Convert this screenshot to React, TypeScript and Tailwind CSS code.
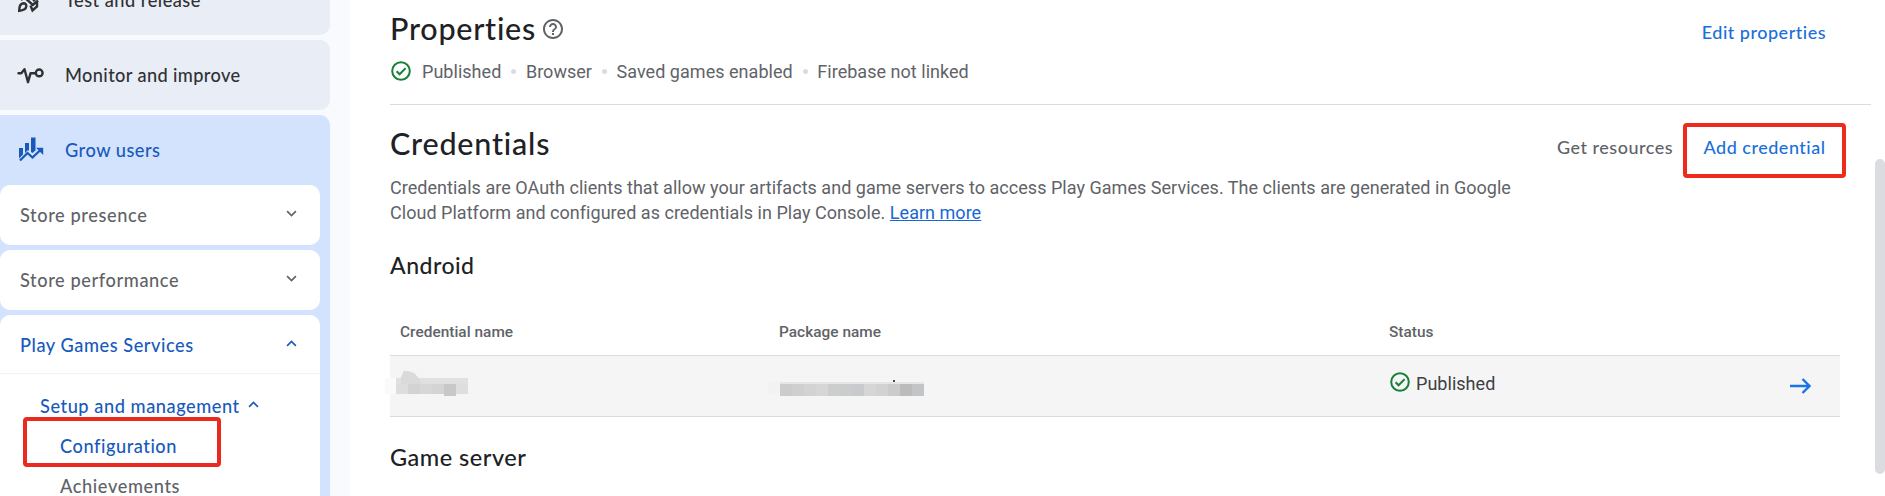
import type { ReactNode } from "react";

function Chevron({ up = false, className = "" }: { up?: boolean; className?: string }) {
  return (
    <svg className={"h-[7px] w-[11px] " + className} viewBox="0 0 12 7" fill="none" stroke="currentColor" strokeWidth="1.8">
      <path d={up ? "M1.2 6 6 1.2 10.8 6" : "M1.2 1 6 5.8 10.8 1"} />
    </svg>
  );
}

function CheckCircle() {
  return (
    <svg className="size-5 shrink-0 text-[#188038]" viewBox="0 0 20 20" fill="none" stroke="currentColor" strokeWidth="2">
      <circle cx="10" cy="10" r="8.8" />
      <path d="M5.6 10.3 8.6 13.3 14.6 7.1" />
    </svg>
  );
}

function HelpCircle() {
  return (
    <svg className="size-5 shrink-0 text-[#5f6368]" viewBox="2 2 20 20" fill="currentColor">
      <path d="M11 18h2v-2h-2v2zm1-16C6.48 2 2 6.48 2 12s4.48 10 10 10 10-4.48 10-10S17.52 2 12 2zm0 18c-4.41 0-8-3.59-8-8s3.59-8 8-8 8 3.59 8 8-3.59 8-8 8zm0-14c-2.210 0-4 1.790-4 4h2c0-1.100.9-2 2-2s2 .9 2 2c0 2-3 1.750-3 5h2c0-2.250 3-2.500 3-5 0-2.210-1.790-4-4-4z" />
    </svg>
  );
}

function RocketIcon() {
  return (
    <svg className="h-[30px] w-[30px]" viewBox="0 0 30 30" fill="none" stroke="currentColor" strokeWidth="2.4" strokeLinejoin="miter">
      <path d="M6 15 12 10C15 6 20 3 25 3c0 5-3 10-7 13" />
      <path d="M9 12 18.500 20.500M23 15.500 17 20.500" />
      <path d="M15.500 20.500 17.500 25.500 22 21.500V16" />
      <path d="M4.200 25.800C4.200 21 5.500 18.500 8.500 18.300c1.800 0 3 1.200 2.800 3-.3 2.700-3 4-7.100 4.500z" />
    </svg>
  );
}

function MonitorIcon() {
  return (
    <svg className="h-[30px] w-[30px]" viewBox="0 0 30 30" fill="none" stroke="currentColor" strokeWidth="2.4" strokeLinejoin="round" strokeLinecap="round">
      <path d="M3.500 13.200h2.800l3.200-4 3.500 13 2.600-9h4" />
      <circle cx="24.200" cy="12.900" r="3.400" />
    </svg>
  );
}

function GrowIcon() {
  return (
    <svg className="h-[30px] w-[30px]" viewBox="0 0 30 30" fill="currentColor">
      <path d="M4 13h4v6.500l-4 4zM10 8h4v8l-1-1-3 3zM16 2.500h4.500v13L17.500 18 16 17z" />
      <path d="m5 25.500 7.500-7.500 5 4.500 9-8.500" fill="none" stroke="currentColor" strokeWidth="2.300" />
      <path d="M21 12.800h7.200V20z" />
    </svg>
  );
}

function NavHeading({ icon, label }: { icon: ReactNode; label: string }) {
  return (
    <div className="flex h-[70px] items-center pl-[15px]">
      {icon}
      <span className="mt-[2px] ml-5">{label}</span>
    </div>
  );
}

function Dot() {
  return <span className="size-[5px] rounded-full bg-[#dadce0]" />;
}

const nameTiles = ["bg-[#dcdddc]", "bg-[#d4d3d3]", "bg-[#d6d7d7]", "bg-[#d3d4d6]", "bg-[#c9c8c9]", "bg-[#dddedd]"];
const packageTiles = [
  "bg-[#cbcccb]", "bg-[#cecfcf]", "bg-[#d2d3d2]", "bg-[#d6d6d6]", "bg-[#cccecd]", "bg-[#cbccce]",
  "bg-[#c9cacd]", "bg-[#d5d6d5]", "bg-[#d1d2d1]", "bg-[#cccacb]", "bg-[#bbbbbc]", "bg-[#c3c4c6]",
];

function Sidebar() {
  return (
    <aside className="h-full w-[350px] shrink-0 bg-[#f8fafe] pr-5 font-['Lato',sans-serif] text-[18.2px] font-medium tracking-[0.5px] text-[#303134]">
      <div className="-mt-[35px] flex flex-col gap-[5px]">
        <div className="rounded-r-[10px] bg-[#e8edf6]">
          <NavHeading icon={<RocketIcon />} label="Test and release" />
        </div>
        <div className="rounded-r-[10px] bg-[#e8edf6] tracking-[0.38px]">
          <NavHeading icon={<MonitorIcon />} label="Monitor and improve" />
        </div>
        <div className="h-[400px] rounded-tr-[10px] bg-[#d3e3fd] pr-2.5 text-[#5f6368]">
          <div className="text-[#185abc]">
            <NavHeading icon={<GrowIcon />} label="Grow users" />
          </div>
          <div className="flex flex-col gap-[5px]">
            <div className="flex h-[60px] items-center justify-between rounded-[10px] bg-white pr-[23px] pl-5">
              <span className="mt-[2px] tracking-[0.6px]">Store presence</span>
              <Chevron className="-mt-[3px]" />
            </div>
            <div className="flex h-[60px] items-center justify-between rounded-[10px] bg-white pr-[23px] pl-5">
              <span className="mt-[2px] tracking-[0.6px]">Store performance</span>
              <Chevron className="-mt-[3px]" />
            </div>
            <div className="h-[220px] rounded-t-[10px] bg-white text-[#185abc]">
              <div className="flex h-[59px] items-center justify-between border-b border-[#f1f3f4] pt-px pr-[23px] pl-5">
                <span className="mt-[2px] tracking-[0.55px]">Play Games Services</span>
                <Chevron up className="-mt-[3px]" />
              </div>
              <div className="mt-[12px] flex h-10 items-center gap-2 pl-10">
                <span className="mt-[2px] tracking-[0.55px]">Setup and management</span>
                <Chevron up className="-mt-[3px]" />
              </div>
              <div className="relative flex h-10 items-center pl-[60px]">
                <span className="mt-[2px] tracking-[0.55px]">Configuration</span>
                <span className="absolute -top-[9px] left-[23px] h-[50px] w-[198px] rounded-[4px] border-4 border-[#ea2a1f]" />
              </div>
              <div className="flex h-10 items-center pl-[60px] text-[#5f6368]">
                <span className="mt-[2px] tracking-[0.6px]">Achievements</span>
              </div>
            </div>
          </div>
        </div>
      </div>
    </aside>
  );
}

function Main() {
  return (
    <main className="h-full w-[1525px] shrink-0 pl-10 font-['Roboto',sans-serif] text-[18px] tracking-[0.03px] text-[#5f6368]">
      <div className="w-[1481px] border-b border-[#dadce0]">
        <div className="flex h-[104px] justify-between pr-[45px]">
          <div>
            <div className="flex h-[57px] items-center gap-[7px]">
              <h1 className="font-['Lato',sans-serif] text-[30.5px] font-medium tracking-[0.75px] text-[#202124]">Properties</h1>
              <HelpCircle />
            </div>
            <div className="flex h-[28px] items-center">
              <div className="mr-px ml-px"><CheckCircle /></div>
              <div className="ml-[10px] flex items-center gap-[9.8px]">
                <span>Published</span><Dot /><span>Browser</span><Dot /><span>Saved games enabled</span><Dot /><span>Firebase not linked</span>
              </div>
            </div>
          </div>
          <a className="mt-[19px] font-['Lato',sans-serif] font-medium tracking-[0.5px] text-[#1a6fdc]">Edit properties</a>
        </div>
      </div>
      <div className="flex h-[73px] items-center justify-between pr-[29px]">
        <h2 className="mt-[3px] font-['Lato',sans-serif] text-[30.5px] leading-9 font-medium tracking-[0.8px] text-[#202124]">Credentials</h2>
        <div className="flex h-full items-start gap-[10px] pt-[18px] font-['Lato',sans-serif] font-medium tracking-[0.5px]">
          <span className="mt-[11px]">Get resources</span>
          <div className="flex h-[55px] w-[163px] items-center justify-center rounded-[4px] border-4 border-[#ee2a1c] pb-1.5 text-[#1a6fdc]">
            <span>Add credential</span>
          </div>
        </div>
      </div>
      <p className="-mt-[3px] w-[1140px] leading-[25px]">
        Credentials are OAuth clients that allow your artifacts and game servers to access Play Games Services. The clients are generated in Google Cloud Platform and configured as credentials in Play Console.{" "}
        <a className="text-[#1967d2] underline">Learn more</a>
      </p>
      <h3 className="mt-[25px] font-['Lato',sans-serif] text-[23px] leading-[30px] font-medium tracking-[0.5px] text-[#202124]">Android</h3>
      <div className="mt-[28px] w-[1450px]">
        <div className="flex h-[47px] items-center pt-0.5 pl-[10px] text-[15.4px] font-medium">
          <span className="w-[379px]">Credential name</span>
          <span className="w-[610px]">Package name</span>
          <span>Status</span>
        </div>
        <div className="flex h-[62px] items-center border-y border-[#dadce0] bg-[#f5f5f5]">
          <div className="relative -ml-[5px] flex h-full w-[383px] pt-[22px]">
            <span className="h-[16px] w-[11px] bg-[#fafafa]" />
            <div className="relative h-[16px] w-[72px] bg-[#dfe0df]">
              <svg className="absolute -top-[7px] left-[4px] h-[13px] w-[22px]" viewBox="0 0 22 14"><path d="M0 14V7L3 0h5l6 2 5 5 3 7z" fill="#dadada" /></svg>
              <div className="absolute top-[6px] flex">
                {nameTiles.map((c, i) => <span key={i} className={(i === 4 ? "h-[12px] " : "h-[10px] ") + "w-3 " + c} />)}
              </div>
            </div>
          </div>
          <div className="flex h-full w-[622px] pt-[26px]">
            <span className="h-3 w-3 bg-[#f2f2f2]" />
            <div className="relative h-[14px] border-t-2 border-[#e5e6e6]">
              <div className="flex">
                {packageTiles.map((c, i) => <span key={i} className={"h-3 w-3 " + c} />)}
              </div>
              <span className="absolute -top-1 left-[113px] size-[2px] bg-[#4d4d4d]" />
            </div>
          </div>
          <div className="-mt-[6px] flex items-center gap-[6px] text-[#3c4043]">
            <div className="-mt-[3px]"><CheckCircle /></div>
            <span>Published</span>
          </div>
          <svg className="mr-[29px] ml-auto h-4 w-[21px]" viewBox="0 0 21 16" fill="none" stroke="#1a73e8" strokeWidth="2.400"><path d="M0 8h19M12.500 1l7 7-7 7" /></svg>
        </div>
      </div>
      <h3 className="mt-[25px] font-['Lato',sans-serif] text-[23.5px] leading-[30px] font-medium tracking-[0.5px] text-[#202124]">Game server</h3>
    </main>
  );
}

export default function App() {
  return (
    <div className="flex h-[496px] w-[1885px] overflow-hidden bg-white">
      <Sidebar />
      <Main />
      <div className="h-[474px] w-[10px] pt-[159px]">
        <div className="h-[315px] rounded-full bg-[#dadce0]" />
      </div>
    </div>
  );
}
